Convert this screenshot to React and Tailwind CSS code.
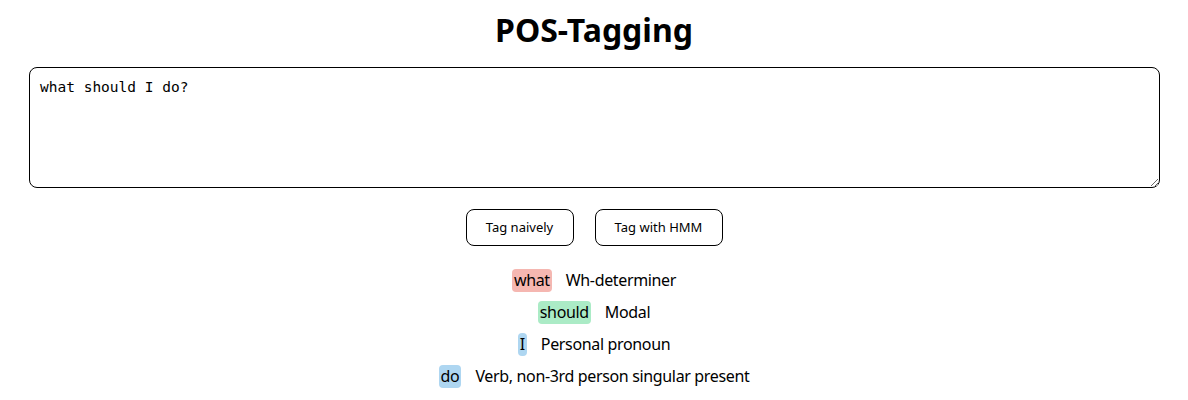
import { useState } from "react";

const tags = [
  { word: "what", label: "Wh-determiner", color: "bg-[#f5b7b1]" },
  { word: "should", label: "Modal", color: "bg-[#abebc6]" },
  { word: "I", label: "Personal pronoun", color: "bg-[#aed6f1]" },
  { word: "do", label: "Verb, non-3rd person singular present", color: "bg-[#aed6f1]" },
];

function App() {
  const [text, setText] = useState("what should I do?");

  return (
    <div className="min-h-screen bg-white text-black font-['Noto_Sans',sans-serif]">
      <h1 className="pt-[10px] text-center text-[32px] font-bold leading-[40px]">POS-Tagging</h1>

      <div className="px-[29px] pr-[28px] mt-[17px]">
        <textarea
          value={text}
          onChange={(e) => setText(e.target.value)}
          className="block w-full h-[121px] border border-black rounded-lg px-[10px] py-[10px] font-['DejaVu_Sans_Mono',monospace] text-[14.5px] leading-[18px] outline-none resize-y"
        />
      </div>

      <div className="flex justify-center gap-[21px] mt-[21px]">
        <button className="w-[108px] h-[37px] border border-black rounded-lg bg-white text-[13px]">
          Tag naively
        </button>
        <button className="w-[128px] h-[37px] border border-black rounded-lg bg-white text-[13px]">
          Tag with HMM
        </button>
      </div>

      {/* tagged output */}
      <div className="flex flex-col items-center mt-[18px]">
        {tags.map((t) => (
          <div key={t.word} className="flex items-center h-[32px] text-[16px] tracking-[-0.35px]">
            <span className={`${t.color} rounded px-[2px] leading-[23px]`}>{t.word}</span>
            <span className="ml-[14px]">{t.label}</span>
          </div>
        ))}
      </div>
    </div>
  );
}

export default App;
